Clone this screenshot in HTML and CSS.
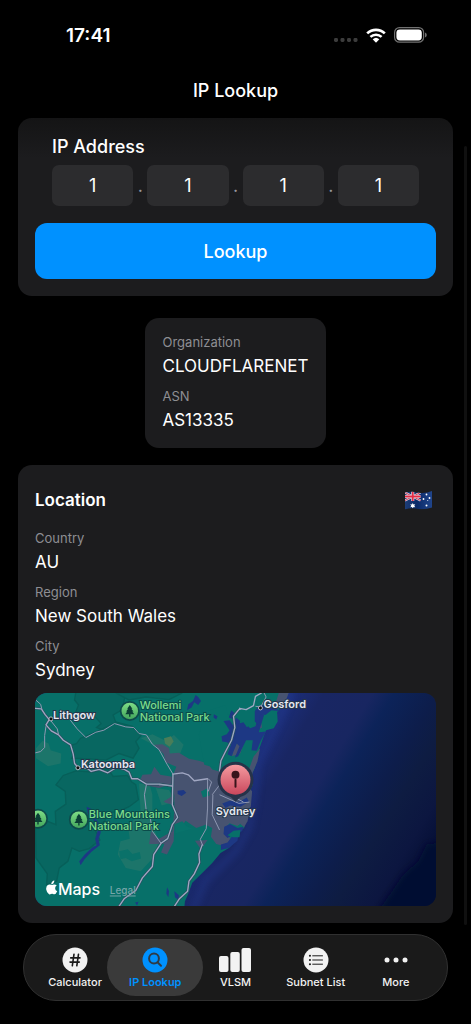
FILE: index.html
```html
<!DOCTYPE html>
<html lang="en">
<head>
    <meta charset="UTF-8">
    <meta name="viewport" content="width=device-width, initial-scale=1.0">
    <title>IP Lookup</title>
    <link rel="stylesheet" href="styles.css">
</head>
<body>
    <div class="status-bar">
        <span class="time">17:41</span>
        <div class="status-icons">
            <svg class="dots" viewBox="0 0 24 4" aria-hidden="true">
                <rect x="0" y="0" width="4" height="4" rx="1.4"/>
                <rect x="6.5" y="0" width="4" height="4" rx="1.4"/>
                <rect x="13" y="0" width="4" height="4" rx="1.4"/>
                <rect x="19.5" y="0" width="4" height="4" rx="1.4"/>
            </svg>
            <svg class="wifi" viewBox="0 0 20 15" aria-hidden="true">
                <path d="M1.2 5.4 A12.6 12.6 0 0 1 18.8 5.4" fill="none" stroke="#fff" stroke-width="2.7"/>
                <path d="M4.4 8.9 A8.1 8.1 0 0 1 15.6 8.9" fill="none" stroke="#fff" stroke-width="2.5"/>
                <path d="M6.7 11.3 A4.9 4.9 0 0 1 13.3 11.3 L10.5 14.3 Q10 14.8 9.5 14.3 Z" fill="#fff"/>
            </svg>
            <svg class="battery" viewBox="0 0 34 16" aria-hidden="true">
                <rect x=".6" y=".6" width="29" height="14.6" rx="4.8" fill="none" stroke="#717171" stroke-width="1.2"/>
                <rect x="2.4" y="2.4" width="25.4" height="11" rx="3.4" fill="#fff"/>
                <path d="M31 5.4 Q32.8 6.2 32.8 7.9 Q32.8 9.6 31 10.4 Z" fill="#717171"/>
            </svg>
        </div>
    </div>

    <header class="title-bar">
        <h1>IP Lookup</h1>
    </header>

    <main class="content">
        <form class="card lookup">
            <fieldset class="ip-group">
                <legend>IP Address</legend>
                <div class="octets">
                    <input type="text" inputmode="numeric" aria-label="First octet" value="1">
                    <span>.</span>
                    <input type="text" inputmode="numeric" aria-label="Second octet" value="1">
                    <span>.</span>
                    <input type="text" inputmode="numeric" aria-label="Third octet" value="1">
                    <span>.</span>
                    <input type="text" inputmode="numeric" aria-label="Fourth octet" value="1">
                </div>
            </fieldset>
            <button type="button" class="lookup-btn">Lookup</button>
        </form>

        <section class="card org">
            <dl>
                <dt>Organization</dt>
                <dd>CLOUDFLARENET</dd>
                <dt>ASN</dt>
                <dd>AS13335</dd>
            </dl>
        </section>

        <section class="card location">
            <div class="location-head">
                <h2>Location</h2>
                <svg class="flag" viewBox="0 0 54 38" role="img" aria-label="Australia">
                    <defs>
                        <clipPath id="flagShape">
                            <path d="M0 3 Q12 0 25 3 Q40 6 54 0 V33 Q40 38 27 36 Q12 33 0 37 Z"/>
                        </clipPath>
                        <linearGradient id="flagShade">
                            <stop offset="0" stop-color="#1d3d77"/>
                            <stop offset=".45" stop-color="#0b2a68"/>
                            <stop offset="1" stop-color="#20458c"/>
                        </linearGradient>
                    </defs>
                    <g clip-path="url(#flagShape)">
                        <rect width="54" height="38" fill="url(#flagShade)"/>
                        <path d="M0 3 L31 19 M31 3 L0 19" stroke="#d5d9e8" stroke-width="4"/>
                        <path d="M0 3 L31 19 M31 3 L0 19" stroke="#d92d45" stroke-width="1.8"/>
                        <path d="M15.5 0 V20 M0 11 H31" stroke="#e6e8f0" stroke-width="6"/>
                        <path d="M15.5 0 V20 M0 11 H31" stroke="#e22c45" stroke-width="3.6"/>
                        <g fill="#fff">
                            <path d="M15.5 24 l1.5 3 3.5 -.5 -2 3 2 3 -3.5 -.3 -1.5 3 -1.5 -3 -3.5 .3 2 -3 -2 -3 3.5 .5 z"/>
                            <circle cx="43" cy="7" r="1.8"/>
                            <circle cx="37" cy="16" r="1.8"/>
                            <circle cx="49" cy="14" r="1.8"/>
                            <circle cx="43" cy="29" r="2"/>
                            <circle cx="45.5" cy="19" r="1"/>
                        </g>
                    </g>
                </svg>
            </div>
            <dl>
                <dt>Country</dt>
                <dd>AU</dd>
                <dt>Region</dt>
                <dd>New South Wales</dd>
                <dt>City</dt>
                <dd>Sydney</dd>
            </dl>

            <svg class="map" viewBox="0 0 402 214" preserveAspectRatio="xMidYMid slice" role="img" aria-label="Map of Sydney">
                <defs>
                    <linearGradient id="sea" gradientUnits="userSpaceOnUse" x1="610" y1="230" x2="1200" y2="590">
                        <stop offset="0" stop-color="#20398e"/>
                        <stop offset=".1" stop-color="#1b2c75"/>
                        <stop offset=".2" stop-color="#192663"/>
                        <stop offset=".38" stop-color="#182661"/>
                        <stop offset=".46" stop-color="#0c2359"/>
                        <stop offset=".62" stop-color="#0d1d4b"/>
                        <stop offset=".72" stop-color="#0e1c42"/>
                        <stop offset=".86" stop-color="#0c1640"/>
                        <stop offset="1" stop-color="#020c32"/>
                    </linearGradient>
                    <linearGradient id="parkDot" x1="0" y1="0" x2="0" y2="1">
                        <stop offset="0" stop-color="#7fdd86"/>
                        <stop offset="1" stop-color="#43a65c"/>
                    </linearGradient>
                    <linearGradient id="pinFill" x1="0" y1="0" x2="0" y2="1">
                        <stop offset="0" stop-color="#f59a9f"/>
                        <stop offset="1" stop-color="#c9475c"/>
                    </linearGradient>
                    <filter id="soft" x="-20%" y="-20%" width="140%" height="140%">
                        <feGaussianBlur stdDeviation="9"/>
                    </filter>
                    <g id="tree">
                        <circle r="10" fill="#0d4b4b"/>
                        <circle r="8.3" fill="url(#parkDot)"/>
                        <path d="M0 -6 L2.6 -2.2 H1.6 L3.7 .6 H2.5 L4.5 3.3 H.7 V5.8 H-.7 V3.3 H-4.5 L-2.5 .6 H-3.7 L-1.6 -2.2 H-2.6 Z" fill="#0b3f35"/>
                    </g>
                </defs>

                <!-- terrain is drawn on a grid three times finer than the labels -->
                <g transform="translate(-9 -8) scale(.33334)">
                    <rect x="20" y="20" width="1230" height="660" fill="url(#sea)"/>
                    <path d="M1234 475 L1205 480 L1180 530 L1135 570 L1080 650 L1060 680 H1250 V475 Z" fill="#000c30" filter="url(#soft)"/>
                    <path d="M800 20 L760 110 L735 160 L695 240 L685 350 L670 430 L630 500 L540 590 L500 680" fill="none" stroke="#253f99" stroke-width="26" opacity=".3" filter="url(#soft)"/>

                    <!-- land -->
                    <path d="M20 20 H785 L770 60 L755 82 L757 110 L745 130 L722 136 L712 162 L702 190 L695 224 L688 250 L678 270 L682 300 L668 330 L674 365 L662 388 L656 430 L640 440 L630 468 L610 490 L585 505 L560 535 L530 565 L500 595 L488 628 L478 650 L475 680 H20 Z" fill="#077069"/>

                    <!-- forest -->
                    <g fill="#086761" stroke="#075f59" stroke-width="4">
                        <path d="M150 20 L146 45 L158 60 L150 80 L178 96 L205 92 L226 116 L212 128 L246 140 L270 112 L262 90 L290 74 L300 20 Z"/>
                        <path d="M190 150 L164 160 L152 176 L132 182 L145 208 L138 220 L190 222 L240 226 L280 206 L322 220 L340 190 L330 170 L346 152 L320 124 L272 112 L225 134 Z"/>
                        <path d="M28 420 L60 408 L90 420 L88 380 L120 358 L118 320 L90 300 L112 272 L150 258 L200 262 L245 250 L262 275 L305 272 L318 292 L330 300 L338 345 L310 366 L280 380 L250 384 L236 410 L205 430 L222 466 L190 492 L160 500 L138 490 L126 530 L100 550 L92 590 L62 600 L64 568 L30 520 Z"/>
                        <path d="M270 24 L310 45 L360 36 L430 44 L470 24 Z"/>
                    </g>

                    <!-- farmland -->
                    <g fill="#1c756a">
                        <path d="M30 190 L50 168 L68 176 L74 196 L106 206 L104 236 L66 244 L30 220 Z"/>
                        <path d="M345 160 L380 148 L420 168 L445 150 L474 180 L460 215 L430 222 L402 190 L376 176 Z"/>
                        <path d="M340 296 L372 300 L380 330 L380 420 L400 470 L382 520 L345 560 L300 550 L276 510 L284 470 L312 462 L306 420 L345 390 Z"/>
                        <path d="M390 310 L430 316 L450 350 L408 362 Z"/>
                    </g>
                    <path d="M415 160 L436 154 L444 170 L432 186 L418 176 Z" fill="#4a7d58"/>
                    <path d="M280 500 L306 494 L320 508 L342 502 L346 522 L318 530 L300 520 L284 524 Z" fill="#0a7169"/>

                    <!-- urban area -->
                    <g fill="#475370">
                        <path d="M386 180 L410 178 L430 190 L432 206 L460 204 L490 222 L520 228 L546 236 L560 254 L590 262 L620 276 L660 292 L680 320 L676 366 L660 380 L654 410 L636 424 L612 416 L600 430 L616 468 L600 486 L572 478 L556 456 L560 430 L540 420 L512 430 L480 408 L462 434 L446 418 L444 470 L424 510 L406 504 L416 478 L370 478 L376 440 L400 462 L440 440 L446 380 L446 332 L436 298 L400 310 L362 302 L342 288 L350 270 L376 268 L386 246 L404 270 L440 276 L452 246 L420 232 L414 208 Z"/>
                        <path d="M414 350 L446 330 L440 360 L420 354 Z"/>
                        <path d="M508 468 L546 466 L526 494 Z"/>
                        <path d="M760 24 L790 24 L780 50 L764 64 L752 50 Z"/>
                        <path d="M690 120 L706 108 L710 128 L694 136 Z"/>
                        <path d="M624 190 L640 166 L654 180 L644 206 L620 214 Z"/>
                        <path d="M704 190 L696 230 L682 262 L674 290 L668 260 L684 216 Z"/>
                    </g>
                    <path d="M520 150 L536 240 L580 252 L590 230 L620 140 L600 60 L540 80 Z" fill="#077069"/>
                    <path d="M526 320 L548 310 L552 332 L532 338 Z M448 418 L470 410 L482 424 L500 432 L450 446 Z" fill="#08736b"/>

                    <!-- rivers, harbours and lakes -->
                    <g fill="#1d3884">
                        <path d="M510 30 L518 36 L526 48 L518 60 L506 52 L498 68 L484 76 L488 58 L502 48 Z"/>
                        <path d="M565 88 L576 94 L572 104 L564 98 Z M617 76 L628 86 L622 102 L610 98 Z"/>
                        <path d="M594 108 L612 106 L622 120 L632 98 L644 108 L640 134 L652 142 L668 124 L676 132 L660 158 L640 160 L630 186 L618 214 L606 208 L616 180 L604 172 L590 170 L588 154 L604 148 L612 136 Z"/>
                        <path d="M640 116 L654 112 L668 132 L690 124 L702 84 L716 90 L700 142 L722 140 L706 168 L694 198 L678 196 L682 166 L662 166 L650 190 L638 214 L628 218 L642 184 L626 168 L632 146 Z"/>
                        <path d="M688 78 L704 60 L730 62 L752 52 L758 78 L738 76 L720 90 L704 88 L700 122 L688 110 Z"/>
                        <path d="M612 348 L640 352 L664 338 L670 350 L646 366 L614 362 L600 370 L590 356 Z"/>
                        <path d="M596 426 L614 418 L636 430 L654 426 L650 440 L630 446 L606 460 L594 448 Z"/>
                        <path d="M586 480 L606 474 L622 452 L640 444 L636 468 L610 490 L586 496 Z"/>
                        <path d="M456 318 L474 316 L482 324 L468 334 L456 328 Z"/>
                        <path d="M182 366 L196 372 L198 388 L226 424 L224 446 L218 464 L222 482 L196 502 L176 524 L164 542 L160 530 L178 508 L200 488 L212 482 L208 462 L218 430 L202 404 L186 388 Z"/>
                        <path d="M424 608 L430 620 L428 638 L422 628 Z M446 620 L460 632 L458 646 L448 638 Z M328 654 L338 652 L334 664 Z"/>
                    </g>
                    <path d="M624 438 L645 436 L642 458 L622 458 L606 452 Z" fill="#077069"/>
                    <path d="M652 385 L664 370 L672 386 L666 410 L656 428 L640 414 Z" fill="#475370"/>

                    <!-- roads -->
                    <g fill="none" stroke="#27505f" stroke-width="8" stroke-linejoin="round">
                        <path d="M28 70 L46 72 L58 90 L70 104 L60 120 L76 138 L98 150 L112 166 L134 180 L142 208 L146 236 L158 250 L184 250 L196 260 L220 254 L246 264 L272 248 L296 254 L310 262 L318 282 L336 282 L362 298 L402 298 L440 304"/>
                        <path d="M640 74 L624 94 L628 128 L618 166 L600 200 L586 228 L582 258"/>
                        <path d="M442 268 L440 360 L456 398 L440 420 L426 462 L406 476 L384 510 L380 546 L350 580 L330 618 L296 642 L278 668"/>
                        <path d="M530 480 L520 508 L522 534 L506 568 L490 590 L486 620 L462 642 L446 666"/>
                    </g>
                    <g fill="none" stroke="#a0a7c2" stroke-width="4" stroke-linejoin="round" stroke-linecap="round">
                        <path d="M28 70 L46 72 L58 90 L70 104 L60 120 L76 138 L98 150 L112 166 L134 180 L142 208 L146 236 L158 250 L184 250 L196 260 L220 254 L246 264 L272 248 L296 254 L310 262 L318 282 L336 282 L362 298 L402 298 L440 304"/>
                        <path d="M646 72 L640 74 L624 94 L628 128 L618 166 L600 200 L586 228 L582 258"/>
                        <path d="M442 268 L470 264 L488 270 L506 288 L546 282"/>
                        <path d="M442 268 L440 360 L456 398 L440 420 L426 462 L406 476 L384 510 L380 546 L350 580 L330 618 L296 642 L278 668"/>
                        <path d="M530 480 L520 508 L522 534 L506 568 L490 590 L486 620 L462 642 L446 666"/>
                        <path d="M708 24 L690 34 L684 62 L662 74 L642 70"/>
                    </g>
                    <g fill="none" stroke="#8f98b2" stroke-width="3" stroke-linejoin="round">
                        <path d="M132 104 L154 132 L180 158 L210 142 L234 136 L266 116 L300 126 L324 128 L340 146 L362 150 L380 178 L400 194 L424 238 L442 268"/>
                        <path d="M60 124 L56 152 L56 188 L44 200 L28 204 M72 104 L94 132 L98 150"/>
                        <path d="M362 300 L356 330 L362 382 L372 390 L380 440 L406 476 M400 300 L440 302"/>
                        <path d="M546 282 L546 370 L542 432 L524 464 L532 484 M562 330 L560 390 L582 436 M580 304 L620 334 L654 352"/>
                        <path d="M548 282 L558 292 L548 320 M582 258 L590 290 L560 330 M582 330 L640 356 L672 352 M690 64 L706 66 L722 36 L716 24"/>
                        <path d="M28 44 L44 58 L48 74"/>
                    </g>
                </g>

                <!-- places -->
                <g class="town-dots">
                    <circle cx="16" cy="26" r="2"/>
                    <circle cx="43" cy="75" r="2"/>
                    <circle cx="226" cy="15" r="2"/>
                </g>
                <g class="town">
                    <text x="18" y="26">Lithgow</text>
                    <text x="46" y="75">Katoomba</text>
                    <text x="229" y="15">Gosford</text>
                </g>
                <g class="park">
                    <use href="#tree" x="95" y="18"/>
                    <use href="#tree" x="44" y="127"/>
                    <use href="#tree" x="3" y="126"/>
                    <text x="105" y="16">Wollemi</text>
                    <text x="105" y="28">National Park</text>
                    <text x="54" y="125">Blue Mountains</text>
                    <text x="54" y="137">National Park</text>
                </g>

                <!-- pin -->
                <circle cx="201" cy="87" r="18" fill="#263349"/>
                <path d="M193 101 H209 L201 109 Z" fill="#263349"/>
                <circle cx="201" cy="87" r="15" fill="url(#pinFill)"/>
                <circle cx="201" cy="82" r="4" fill="#38141b"/>
                <rect x="200" y="86" width="2" height="9" rx="1" fill="#38141b"/>
                <text class="city" x="201" y="122" text-anchor="middle">Sydney</text>

                <!-- attribution -->
                <path transform="translate(11 188)" d="M8.4 0 Q8.5 1.8 7.3 2.9 Q6.3 3.8 5.3 3.6 Q5.2 2 6.4 .9 Q7.3 .1 8.4 0 Z M10.8 5.1 Q8.9 6.2 9.2 8.2 Q9.4 9.9 11.3 10.7 Q9.9 13.8 8.3 13.8 Q7.6 13.8 7.1 13.5 Q6.1 13.1 5 13.6 Q4.2 14 3.5 13.9 Q1.9 13.5 .8 10.7 Q-.3 7.8 .6 5.9 Q1.6 4 3.5 4 Q4.4 4 5.1 4.3 Q5.9 4.6 6.8 4.2 Q9.2 3.3 10.8 5.1 Z" fill="#fff"/>
                <text class="maps-mark" x="23" y="203">Maps</text>
                <a href="#legal"><text class="legal" x="75" y="202">Legal</text></a>
            </svg>
        </section>
    </main>

    <nav class="tab-bar">
        <a href="#calculator" class="tab">
            <svg viewBox="0 0 26 26" aria-hidden="true">
                <circle cx="13" cy="13" r="12.5"/>
                <path d="M12 7.2 L10.3 18.8 M16.5 7.2 L14.8 18.8 M8.7 10.9 H18 M8 15.1 H17.3" class="cut hash"/>
            </svg>
            <span>Calculator</span>
        </a>
        <a href="#lookup" class="tab active" aria-current="page">
            <svg viewBox="0 0 26 26" aria-hidden="true">
                <circle cx="13" cy="13" r="12.5"/>
                <circle cx="12" cy="11.5" r="4.9" class="cut"/>
                <path d="M15.5 15.2 L19 18.7" class="cut"/>
            </svg>
            <span>IP Lookup</span>
        </a>
        <a href="#vlsm" class="tab">
            <svg class="wide" viewBox="0 0 32 26" aria-hidden="true">
                <rect x="0" y="9" width="9.5" height="16" rx="2"/>
                <rect x="11.3" y="5" width="9.5" height="20" rx="2"/>
                <rect x="22.5" y="1" width="9.5" height="24" rx="2"/>
            </svg>
            <span>VLSM</span>
        </a>
        <a href="#subnets" class="tab">
            <svg viewBox="0 0 26 26" aria-hidden="true">
                <circle cx="13" cy="13" r="12.5"/>
                <path d="M9.7 8.8 H19.5 M9.7 13 H19.5 M9.7 17.2 H19.5" class="cut thin"/>
                <path d="M6.9 8.8 H7 M6.9 13 H7 M6.9 17.2 H7" class="cut"/>
            </svg>
            <span>Subnet List</span>
        </a>
        <a href="#more" class="tab">
            <svg viewBox="0 0 26 26" aria-hidden="true">
                <circle cx="4" cy="13" r="2.5"/>
                <circle cx="13" cy="13" r="2.5"/>
                <circle cx="22" cy="13" r="2.5"/>
            </svg>
            <span>More</span>
        </a>
    </nav>

    <div class="scroll-thumb"></div>
</body>
</html>
```

FILE: styles.css
```css
* {
    box-sizing: border-box;
}
body {
    font-family: Inter, 'Liberation Sans', sans-serif;
    margin: 0;
    background: #000;
    color: #fff;
    position: relative;
}
h1, h2, dl, dd {
    margin: 0;
}

/* Status bar */
.status-bar {
    display: flex;
    justify-content: space-between;
    align-items: center;
    height: 70px;
    padding: 0 43px 0 66px;
}
.time {
    font-size: 19px;
    font-weight: 600;
}
.status-icons {
    display: flex;
    align-items: center;
    gap: 8px;
}
.dots {
    width: 24px;
    height: 4px;
    margin-top: 10px;
    fill: #3c3c3c;
}
.wifi {
    width: 20px;
    height: 15px;
}
.battery {
    width: 34px;
    height: 16px;
}
.title-bar {
    height: 48px;
    padding-top: 9px;
    text-align: center;
}
h1 {
    font-size: 18px;
    line-height: 24px;
    font-weight: 500;
}

/* Cards */
.content {
    display: flex;
    flex-direction: column;
    padding: 0 18px;
}
.card {
    background: #1c1c1e;
    border-radius: 14px;
    padding: 17px;
}
.lookup {
    background: linear-gradient(#141415, #1c1c1e 40px);
    margin-bottom: 22px;
}
.ip-group {
    min-width: 0;
    border: none;
    margin: 0;
    padding: 0 17px;
}
legend {
    padding: 0;
    font-size: 18px;
    line-height: 24px;
    font-weight: 500;
    margin-bottom: 6px;
}
.octets {
    display: flex;
    align-items: center;
}
.octets input {
    flex: 1;
    min-width: 0;
    height: 41px;
    padding: 0;
    border: none;
    border-radius: 7px;
    background: #2c2c2e;
    color: #fff;
    font-family: inherit;
    font-size: 18px;
    text-align: center;
}
.octets span {
    width: 14px;
    text-align: center;
    color: #98989f;
    font-size: 18px;
}
.lookup-btn {
    display: block;
    width: 100%;
    height: 56px;
    margin-top: 17px;
    border: none;
    border-radius: 12px;
    background: #0091ff;
    color: #fff;
    font-family: inherit;
    font-size: 18px;
    font-weight: 500;
    cursor: pointer;
}
.org {
    align-self: center;
    margin-bottom: 17px;
}
dt {
    color: #8e8e93;
    font-size: 13px;
    line-height: 15px;
}
dd {
    font-size: 17px;
    line-height: 22px;
    margin-top: 5px;
}
dd + dt {
    margin-top: 12px;
}

/* Location */
.location-head {
    display: flex;
    justify-content: space-between;
    align-items: center;
    height: 36px;
    padding-right: 4px;
    margin-bottom: 13px;
}
h2 {
    font-size: 17px;
    line-height: 24px;
    font-weight: 600;
}
.flag {
    width: 27px;
    height: 19px;
}
.map {
    display: block;
    width: 100%;
    margin-top: 12px;
    border-radius: 12px;
}
.town-dots {
    fill: #111;
    stroke: #b4bcc8;
    stroke-width: 1;
}
.town text, .city {
    fill: #e6e8f0;
    stroke: #24364b;
    stroke-width: 2;
    paint-order: stroke;
    font-size: 11px;
    font-weight: 600;
}
.park text {
    fill: #7cdc8c;
    stroke: #0b4b4a;
    stroke-width: 2;
    paint-order: stroke;
    font-size: 11px;
    font-weight: 500;
}
.maps-mark {
    fill: #fff;
    font-size: 16px;
    font-weight: 500;
}
.legal {
    fill: #74a5a8;
    font-size: 10px;
    font-weight: 500;
    text-decoration: underline;
}

/* Tab bar */
.tab-bar {
    display: grid;
    grid-template-columns: repeat(5, 1fr);
    margin: 11px 23px 22px;
    padding: 4px 11px;
    border: 1px solid #303030;
    border-radius: 33px;
    background: #1a1a1a;
}
.tab {
    display: flex;
    flex-direction: column;
    align-items: center;
    position: relative;
    height: 57px;
    padding-top: 8px;
    color: #f2f2f2;
    font-size: 11px;
    line-height: 14px;
    font-weight: 500;
    text-decoration: none;
    white-space: nowrap;
}
.tab svg {
    width: 26px;
    height: 26px;
    margin-bottom: 2px;
    fill: currentColor;
    position: relative;
}
.tab .wide {
    width: 32px;
}
.tab span {
    position: relative;
}
.tab .cut {
    fill: none;
    stroke: #1a1a1a;
    stroke-width: 2;
    stroke-linecap: round;
}
.tab .hash {
    stroke-width: 1.6;
}
.tab .thin {
    stroke-width: 1;
}
.tab.active {
    color: #0091ff;
    font-weight: 600;
}
.tab.active::before {
    content: '';
    position: absolute;
    inset: 0 -8px;
    border-radius: 29px;
    background: #3a3a3a;
}
.tab.active .cut {
    stroke: #2e3b47;
}
.scroll-thumb {
    position: absolute;
    top: 146px;
    bottom: 98px;
    right: 4px;
    width: 3px;
    border-radius: 2px;
    background: #101010;
}
```
